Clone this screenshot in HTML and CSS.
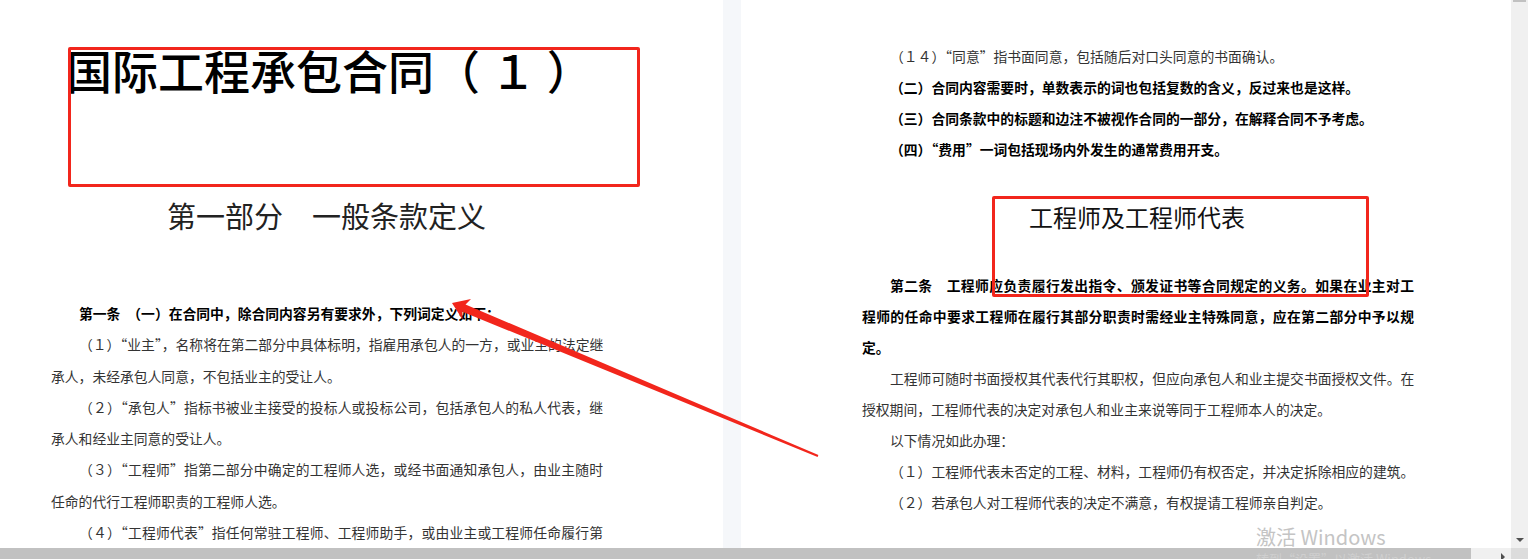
FILE: index.html
```html
<!DOCTYPE html>
<html lang="zh-CN">
<head>
    <meta charset="UTF-8">
    <title>国际工程承包合同</title>
    <link rel="stylesheet" href="styles.css">
</head>
<body>

    <div class="viewer">
        <div class="main">
            <div class="doc">
                <div class="page page-left">
                    <div class="doc-title">国际工程承包合同（ １ ）</div>
                    <div class="part-title">第一部分　一般条款定义</div>

                    <div class="body-text left-text">
                        <div class="ln ind b">第一条　（一）在合同中，除合同内容另有要求外，下列词定义如下：</div>
                        <div class="ln ind full">（１）“业主”，名称将在第二部分中具体标明，指雇用承包人的一方，或业主的法定继</div>
                        <div class="ln">承人，未经承包人同意，不包括业主的受让人。</div>
                        <div class="ln ind full">（２）“承包人”指标书被业主接受的投标人或投标公司，包括承包人的私人代表，继</div>
                        <div class="ln">承人和经业主同意的受让人。</div>
                        <div class="ln ind full">（３）“工程师”指第二部分中确定的工程师人选，或经书面通知承包人，由业主随时</div>
                        <div class="ln">任命的代行工程师职责的工程师人选。</div>
                        <div class="ln ind full">（４）“工程师代表”指任何常驻工程师、工程师助手，或由业主或工程师任命履行第</div>
                    </div>
                </div>

                <div class="page-gap"></div>

                <div class="page page-right">
                    <div class="body-text">
                        <div class="ln ind">（１４）“同意”指书面同意，包括随后对口头同意的书面确认。</div>
                        <div class="ln ind b">（二）合同内容需要时，单数表示的词也包括复数的含义，反过来也是这样。</div>
                        <div class="ln ind b">（三）合同条款中的标题和边注不被视作合同的一部分，在解释合同不予考虑。</div>
                        <div class="ln ind b">（四）“费用”一词包括现场内外发生的通常费用开支。</div>
                    </div>

                    <div class="section-title">工程师及工程师代表</div>

                    <div class="body-text section-text">
                        <div class="ln ind b full">第二条　工程师应负责履行发出指令、颁发证书等合同规定的义务。如果在业主对工</div>
                        <div class="ln b full">程师的任命中要求工程师在履行其部分职责时需经业主特殊同意，应在第二部分中予以规</div>
                        <div class="ln b">定。</div>
                        <div class="ln ind full">工程师可随时书面授权其代表代行其职权，但应向承包人和业主提交书面授权文件。在</div>
                        <div class="ln">授权期间，工程师代表的决定对承包人和业主来说等同于工程师本人的决定。</div>
                        <div class="ln ind">以下情况如此办理：</div>
                        <div class="ln ind full">（１）工程师代表未否定的工程、材料，工程师仍有权否定，并决定拆除相应的建筑。</div>
                        <div class="ln ind">（２）若承包人对工程师代表的决定不满意，有权提请工程师亲自判定。</div>
                    </div>
                </div>
            </div>

            <div class="vscroll">
                <div class="vthumb"></div>
                <div class="vtrack"></div>
                <div class="arrow-btn"><span class="tri-down"></span></div>
            </div>
        </div>

        <div class="hscroll">
            <div class="hthumb"></div>
            <div class="htrack"><span class="tri-right"></span></div>
            <div class="corner"></div>
        </div>

        <!-- annotations drawn over the document -->
        <div class="mark mark-title"></div>
        <div class="mark mark-section"></div>
        <svg class="arrow" width="1528" height="559" viewBox="0 0 1528 559">
            <polygon fill="#f2261c" points="452,303 471,299.1 465.5,304.4 818.4,455.1 817.6,456.9 462.4,311.7 462.5,319.4"/>
        </svg>

        <div class="watermark">
            <div class="wm-big">激活 Windows</div>
            <div class="wm-small">转到“设置”以激活 Windows。</div>
        </div>
    </div>

</body>
</html>
```

FILE: styles.css
```css
body {
    margin: 0;
    padding: 0;
    font-family: "Noto Sans CJK SC", "Liberation Sans", sans-serif;
    background: #fff;
}

.viewer {
    position: relative;
    width: 1528px;
    height: 559px;
    overflow: hidden;
    display: flex;
    flex-direction: column;
}

.main {
    display: flex;
    height: 548px;
}

.doc {
    display: flex;
    width: 1511px;
    overflow: hidden;
}

.page {
    background: #fff;
    box-sizing: border-box;
    flex-shrink: 0;
}

.page-left {
    width: 723px;
    padding: 46px 120px 0 51px;
}

.page-gap {
    width: 18px;
    flex-shrink: 0;
    background: #f5f7fa;
}

.page-right {
    width: 770px;
    padding: 41px 97px 0 121px;
}

.doc-title {
    margin-left: 15px;
    font-size: 46px;
    line-height: 46px;
    font-weight: 500;
    color: #000;
    white-space: pre;
}

.part-title {
    margin-top: 109px;
    margin-left: 116px;
    font-size: 29px;
    line-height: 29px;
    color: #222;
    white-space: nowrap;
}

.section-title {
    margin-top: 40px;
    margin-left: 167px;
    font-size: 24px;
    line-height: 24px;
    color: #111;
    white-space: nowrap;
}

.body-text {
    width: 552px;
    font-size: 13.8px;
    line-height: 31px;
    color: #333;
}

.left-text {
    margin-top: 68px;
    line-height: 31.3px;
}

.section-text {
    margin-top: 41px;
}

.ln {
    white-space: nowrap;
}

.ln.ind {
    padding-left: 28px;
}

.ln.full {
    text-align: justify;
    text-align-last: justify;
}

.ln.b {
    font-weight: bold;
    color: #000;
}

/* scrollbars */
.vscroll {
    width: 17px;
    background: #f0f0f0;
    display: flex;
    flex-direction: column;
}

.vthumb {
    height: 2px;
    margin: 0 2px;
    background: #c1c1c1;
}

.vtrack {
    flex: 1;
}

.arrow-btn {
    height: 17px;
    display: flex;
    align-items: center;
    justify-content: center;
}

.tri-down {
    width: 0;
    height: 0;
    border-left: 4px solid transparent;
    border-right: 4px solid transparent;
    border-top: 4px solid #505050;
}

.hscroll {
    display: flex;
    height: 11px;
}

.hthumb {
    width: 1471px;
    background: #c1c1c1;
}

.htrack {
    width: 40px;
    background: #f0f0f0;
    display: flex;
    align-items: flex-end;
    justify-content: flex-end;
    padding-right: 6px;
    box-sizing: border-box;
}

.tri-right {
    width: 0;
    height: 0;
    margin-bottom: -2px;
    border-top: 4px solid transparent;
    border-bottom: 4px solid transparent;
    border-left: 4px solid #505050;
}

.corner {
    width: 17px;
    background: #dcdcdc;
}

/* red annotations */
.mark {
    position: absolute;
    box-sizing: border-box;
    border: 3px solid #f2261c;
    border-radius: 2px;
}

.mark-title {
    left: 68px;
    top: 47px;
    width: 572px;
    height: 140px;
}

.mark-section {
    left: 992px;
    top: 196px;
    width: 377px;
    height: 101px;
}

.arrow {
    position: absolute;
    left: 0;
    top: 0;
    pointer-events: none;
}

.watermark {
    position: absolute;
    left: 1256px;
    top: 524px;
    color: #c4c4c4;
    white-space: nowrap;
}

.wm-big {
    font-family: "Noto Sans CJK SC", "Open Sans", sans-serif;
    font-size: 20px;
    line-height: 26px;
}

.wm-small {
    font-size: 13px;
    line-height: 18px;
    color: #cfcfcf;
}
```
